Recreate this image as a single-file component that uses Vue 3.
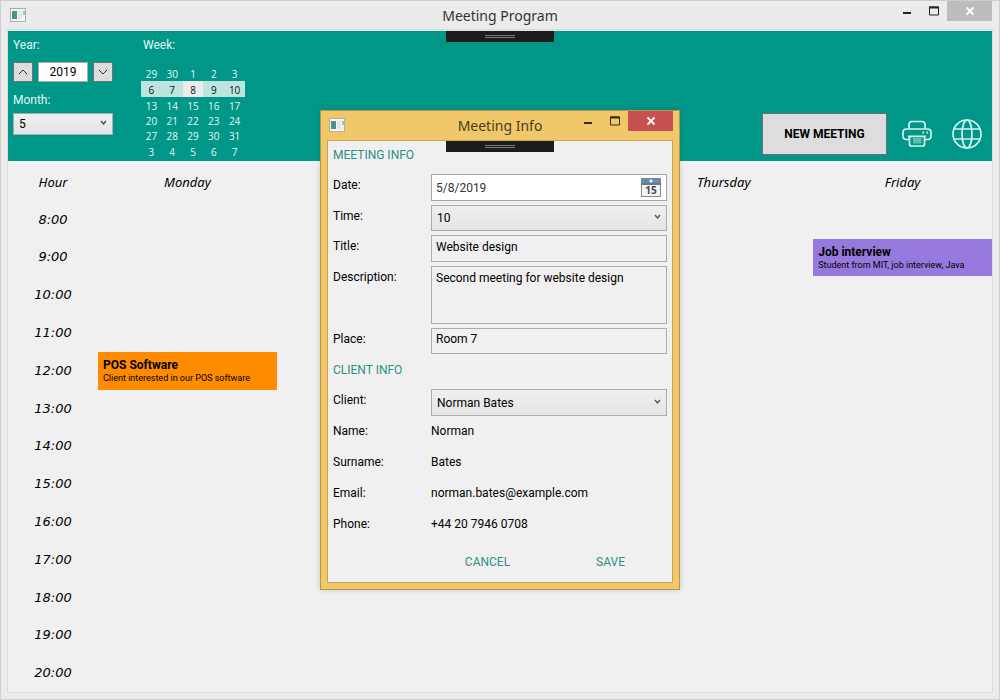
<script setup>
import { ref } from 'vue'

const year = ref('2019')
const month = ref('5')
const weeks = [
  [29, 30, 1, 2, 3],
  [6, 7, 8, 9, 10],
  [13, 14, 15, 16, 17],
  [20, 21, 22, 23, 24],
  [27, 28, 29, 30, 31],
  [3, 4, 5, 6, 7],
]
const days = ['Monday', '', '', 'Thursday', 'Friday']
const hours = Array.from({ length: 13 }, (_, i) => i + 8)
const events = [
  { day: 0, hour: 12, title: 'POS Software', note: 'Client interested in our POS software', kind: 'orange' },
  { day: 4, hour: 9, title: 'Job interview', note: 'Student from MIT, job interview, Java', kind: 'violet' },
]
const eventsAt = (day, hour) => events.filter((e) => e.day === day && e.hour === hour)

const form = ref({
  date: '5/8/2019',
  time: '10',
  title: 'Website design',
  description: 'Second meeting for website design',
  place: 'Room 7',
  client: 'Norman Bates',
})
const details = [
  ['Name:', 'Norman'],
  ['Surname:', 'Bates'],
  ['Email:', 'norman.bates@example.com'],
  ['Phone:', '+44 20 7946 0708'],
]
</script>

<template>
  <div class="window">
    <header class="titlebar">
      <svg class="app-icon" width="16" height="14" viewBox="0 0 16 14" aria-hidden="true">
        <rect x="0.5" y="0.5" width="15" height="13" fill="#f4f6f6" stroke="#a9aeb2" />
        <rect x="2" y="3" width="5" height="8" fill="#4f8f8a" />
        <rect x="8" y="3" width="4" height="8" fill="#e0e6ea" />
        <rect x="13" y="3" width="2" height="4" fill="#9cc4bd" />
      </svg>
      <h1 class="caption">Meeting Program</h1>
      <div class="controls">
        <button class="ctl" aria-label="Minimize"><svg width="10" height="10" viewBox="0 0 10 10"><rect x="1" y="6" width="8" height="2" fill="#222" /></svg></button>
        <button class="ctl" aria-label="Maximize"><svg width="10" height="10" viewBox="0 0 10 10"><path d="M.5 1v8h9V1z" fill="none" stroke="#222" /><path d="M0 1.5h10" stroke="#222" stroke-width="2" /></svg></button>
        <button class="ctl close" aria-label="Close"><svg width="10" height="10" viewBox="0 0 10 10"><path d="M1.5 1.5l7 7m0-7l-7 7" stroke="#fff" stroke-width="1.8" /></svg></button>
      </div>
    </header>

    <main class="client">
      <span class="grip"></span>
      <section class="toolbar">
        <div class="period">
          <label class="tlabel" for="year">Year:</label>
          <div class="spinner">
            <button class="step" aria-label="Previous year"><svg width="10" height="6" viewBox="0 0 10 6"><path d="M1 5l4-4 4 4" fill="none" stroke="#333" /></svg></button>
            <input id="year" v-model="year" class="year" type="text" />
            <button class="step" aria-label="Next year"><svg width="10" height="6" viewBox="0 0 10 6"><path d="M1 1l4 4 4-4" fill="none" stroke="#333" /></svg></button>
          </div>
          <label class="tlabel month-label" for="month">Month:</label>
          <div class="picker month">
            <select id="month" v-model="month"><option>5</option></select>
            <svg class="chev" width="7" height="6" viewBox="0 0 7 6"><path d="M1 1l2.5 3L6 1" fill="none" stroke="#444" stroke-width="1.3" /></svg>
          </div>
        </div>
        <div class="week">
          <span id="week-label" class="tlabel">Week:</span>
          <table class="calendar" aria-labelledby="week-label">
            <tbody>
              <tr v-for="(w, i) in weeks" :key="i" :class="{ chosen: i === 1 }">
                <td v-for="d in w" :key="d" :class="{ today: i === 1 && d === 8 }">{{ d }}</td>
              </tr>
            </tbody>
          </table>
        </div>
        <div class="actions">
          <button class="new">NEW MEETING</button>
          <button class="icon" aria-label="Print">
            <svg width="30" height="28" viewBox="0 0 30 28" fill="none" stroke="#d5f3ee" stroke-width="1.7" stroke-linejoin="round">
              <path d="M7 8.500V4.500Q7 1.500 10 1.500H20Q23 1.500 23 4.500V8.500" />
              <path d="M7.500 19.500H4.500Q1 19.500 1 16V12.500Q1 9 4.500 9H25.500Q29 9 29 12.500V16Q29 19.500 25.500 19.500H22.500" />
              <path d="M6 16.300H24M7.500 16.500V24Q7.500 26 9.500 26H20.500Q22.500 26 22.500 24V16.500" />
              <rect x="11" y="18" width="8.500" height="5.500" fill="#62bdb1" stroke="none" />
              <path d="M20.500 12.500h1.600M24.500 12.500h1.600" stroke-width="2.200" />
            </svg>
          </button>
          <button class="icon" aria-label="Website">
            <svg width="30" height="30" viewBox="0 0 30 30" fill="none" stroke="#d5f3ee" stroke-width="1.7">
              <circle cx="15" cy="15" r="14" />
              <ellipse cx="15" cy="15" rx="5" ry="14" />
              <path d="M2 10h26M2 20h26" />
            </svg>
          </button>
        </div>
      </section>

      <table class="schedule">
        <thead>
          <tr>
            <th>Hour</th>
            <th v-for="(d, i) in days" :key="i">{{ d }}</th>
          </tr>
        </thead>
        <tbody>
          <tr v-for="h in hours" :key="h">
            <th class="hour">{{ h }}:00</th>
            <td v-for="(d, i) in days" :key="i">
              <div v-for="e in eventsAt(i, h)" :key="e.title" class="event" :class="e.kind">
                <strong>{{ e.title }}</strong>
                <span>{{ e.note }}</span>
              </div>
            </td>
          </tr>
        </tbody>
      </table>
    </main>

    <div class="overlay">
      <section class="dialog" role="dialog" aria-labelledby="dialog-title">
        <header class="titlebar">
          <svg class="app-icon" width="16" height="14" viewBox="0 0 16 14" aria-hidden="true">
            <rect x="0.5" y="0.5" width="15" height="13" fill="#f4f6f6" stroke="#b5b09c" />
            <rect x="2" y="3" width="5" height="8" fill="#4f8f8a" />
            <rect x="8" y="3" width="4" height="8" fill="#e0e6ea" />
            <rect x="13" y="3" width="2" height="4" fill="#9cc4bd" />
          </svg>
          <h2 id="dialog-title" class="caption">Meeting Info</h2>
          <div class="controls">
            <button class="ctl" aria-label="Minimize"><svg width="10" height="10" viewBox="0 0 10 10"><rect x="1" y="6" width="8" height="2" fill="#332a12" /></svg></button>
            <button class="ctl" aria-label="Maximize"><svg width="10" height="10" viewBox="0 0 10 10"><path d="M.5 1v8h9V1z" fill="none" stroke="#332a12" /><path d="M0 1.500h10" stroke="#332a12" stroke-width="2" /></svg></button>
            <button class="ctl close red" aria-label="Close"><svg width="10" height="10" viewBox="0 0 10 10"><path d="M1.500 1.500l7 7m0-7l-7 7" stroke="#fff" stroke-width="1.800" /></svg></button>
          </div>
        </header>
        <form class="sheet" @submit.prevent>
          <span class="grip"></span>
          <h3>MEETING INFO</h3>
          <div class="fields">
            <label for="date">Date:</label>
            <div class="datebox">
              <input id="date" v-model="form.date" type="text" />
              <button type="button" aria-label="Open calendar">
                <svg width="20" height="19" viewBox="0 0 20 19">
                  <rect x="0.500" y="0.500" width="19" height="18" fill="#f4f4f4" stroke="#83888f" />
                  <rect x="1" y="1" width="18" height="4" fill="#5b8fc2" />
                  <rect x="0" y="5" width="20" height="2" fill="#707780" />
                  <circle cx="10" cy="3" r="1.500" fill="#fff" />
                  <text x="10" y="16" text-anchor="middle" font-family="Open Sans, sans-serif" font-weight="700" font-size="10" fill="#45484d">15</text>
                </svg>
              </button>
            </div>
            <label for="time">Time:</label>
            <div class="picker time">
              <select id="time" v-model="form.time"><option>10</option></select>
              <svg class="chev" width="7" height="6" viewBox="0 0 7 6"><path d="M1 1l2.500 3L6 1" fill="none" stroke="#555" stroke-width="1.300" /></svg>
            </div>
            <label for="title">Title:</label>
            <input id="title" v-model="form.title" class="text title" type="text" />
            <label for="description">Description:</label>
            <textarea id="description" v-model="form.description" class="text"></textarea>
            <label for="place">Place:</label>
            <input id="place" v-model="form.place" class="text place" type="text" />
          </div>
          <h3 class="second">CLIENT INFO</h3>
          <div class="fields">
            <label for="client">Client:</label>
            <div class="picker who">
              <select id="client" v-model="form.client"><option>Norman Bates</option></select>
              <svg class="chev" width="7" height="6" viewBox="0 0 7 6"><path d="M1 1l2.500 3L6 1" fill="none" stroke="#555" stroke-width="1.300" /></svg>
            </div>
          </div>
          <dl class="details">
            <template v-for="[k, v] in details" :key="k">
              <dt>{{ k }}</dt>
              <dd>{{ v }}</dd>
            </template>
          </dl>
          <div class="buttons">
            <button type="button">CANCEL</button>
            <button type="submit">SAVE</button>
          </div>
        </form>
      </section>
    </div>
  </div>
</template>

<style>
body {
  background: #ebebeb;
}
</style>

<style scoped>
*,
*::after {
  box-sizing: border-box;
}
button,
input,
select,
textarea {
  font: inherit;
  color: inherit;
  margin: 0;
  padding: 0;
  border: 0;
  background: none;
  border-radius: 0;
  outline: none;
}
svg {
  display: block;
}
.window {
  position: relative;
  display: flex;
  flex-direction: column;
  min-height: 100vh;
  padding: 0 7px 7px;
  border: 1px solid #cdcdcd;
  background: #ebebeb;
  font: 12px/18px Roboto, sans-serif;
  color: #000;
}
.titlebar {
  display: grid;
  grid-template-columns: 1fr auto 1fr;
  height: 29px;
}
.app-icon {
  margin: 7px 0 0 2px;
}
.caption {
  margin: 0;
  font: 14px/29px "Noto Sans", sans-serif;
  color: #333;
}
.controls {
  display: flex;
  justify-content: flex-end;
  align-items: flex-start;
}
.ctl {
  display: grid;
  place-items: center;
  width: 27px;
  height: 20px;
}
.close {
  width: 45px;
  background: #bcbcbc;
}
.client {
  position: relative;
  flex: 1;
  display: flex;
  flex-direction: column;
  background: #f0f0f0;
  border-top: 1px solid #d5e8e5;
  box-shadow: 0 0 0 1px #dcdcdc;
}
.grip {
  position: absolute;
  top: 0;
  left: 50%;
  width: 108px;
  height: 11px;
  margin-left: -54px;
  background: #1c1c1c;
}
.grip::after {
  content: '';
  position: absolute;
  left: 39px;
  top: 4px;
  width: 30px;
  height: 3px;
  border: solid #777;
  border-width: 1px 0;
}
.toolbar {
  display: flex;
  padding: 5px;
  height: 130px;
  background: #009788;
}
.tlabel {
  display: block;
  color: #e4f7f4;
}
.period {
  width: 100px;
}
.spinner {
  display: flex;
  justify-content: space-between;
  margin-top: 8px;
}
.step {
  display: grid;
  place-items: center;
  width: 20px;
  height: 20px;
  background: #ddd;
  border: 1px solid #707070;
}
.year {
  width: 50px;
  height: 20px;
  background: #fff;
  border: 1px solid #abadb3;
  text-align: center;
}
.month-label {
  margin-top: 9px;
}
.picker {
  position: relative;
}
.picker select {
  appearance: none;
  display: block;
  width: 100%;
  height: 100%;
  padding: 0 5px;
  border: 1px solid #acacac;
  background: linear-gradient(#f0f0f0, #e4e4e4);
}
.chev {
  position: absolute;
  right: 6px;
  top: 50%;
  margin-top: -4px;
  pointer-events: none;
}
.month {
  height: 22px;
  margin-top: 4px;
}
.week {
  margin-left: 28px;
}
.week .tlabel {
  padding-left: 2px;
}
.calendar {
  width: 104px;
  margin-top: 12px;
  border-collapse: collapse;
  table-layout: fixed;
  font: 10px/13px "Open Sans", sans-serif;
  color: #e4f7f4;
  text-align: center;
}
.calendar td {
  height: 15px;
  padding: 2px 0 0;
}
.calendar tr:nth-child(3) td,
.calendar tr:nth-child(6) td {
  height: 16px;
}
.calendar .chosen td {
  height: 16px;
  background: #bde4dd;
  color: #111;
}
.calendar .chosen .today {
  background: #ebebeb;
}
.actions {
  display: flex;
  align-items: center;
  gap: 20px;
  height: 42px;
  margin: auto 5px 1px auto;
}
.new {
  width: 125px;
  height: 42px;
  margin-right: -5px;
  border: 1px solid #707070;
  background: #ddd;
  font-weight: 700;
  color: #000;
}
.schedule {
  flex: 1;
  display: grid;
  grid-template-rows: repeat(14, 1fr);
  padding-top: 2px;
  font: 13px/20px "Noto Sans", sans-serif;
}
.schedule thead,
.schedule tbody {
  display: contents;
}
.schedule tr {
  display: grid;
  grid-template-columns: 90px repeat(5, 1fr);
}
.schedule th {
  display: grid;
  place-items: center;
  padding: 0;
  font-weight: 400;
  font-style: italic;
}
.schedule .hour {
  font-family: "DejaVu Sans", sans-serif;
}
.schedule td {
  display: grid;
  padding: 0;
}
.event {
  display: flex;
  flex-direction: column;
  padding: 6px 5px 0;
  white-space: nowrap;
  overflow: hidden;
  font-family: Roboto, sans-serif;
  color: #000;
}
.event strong {
  font-size: 12px;
  line-height: 15px;
}
.event span {
  font-size: 9px;
  line-height: 11px;
}
.orange {
  background: #ff8c00;
}
.violet {
  background: #9679dc;
}
.overlay {
  position: absolute;
  inset: 0;
  display: grid;
  place-items: center;
}
.dialog {
  width: 360px;
  padding: 0 6px 6px;
  border: 1px solid #b9944a;
  background: #f0c869;
  box-shadow: 0 0 5px rgba(0, 0, 0, 0.16);
}
.dialog .caption {
  color: #4a3d1e;
}
.red {
  background: #c75050;
}
.sheet {
  position: relative;
  padding: 4px 5px 9px;
  border: 1px solid #c9a455;
  background: #f0f0f0;
}
h3 {
  margin: 0 0 9px;
  font: 12px/20px Roboto, sans-serif;
  color: #2a9184;
}
.second {
  margin-top: 6px;
}
.fields {
  display: grid;
  grid-template-columns: 98px 1fr;
  row-gap: 4px;
}
.fields label {
  line-height: 23px;
}
.datebox {
  display: flex;
  align-items: center;
  height: 27px;
  padding: 0 5px 0 4px;
  border: 1px solid #9aaabb;
  background: #fff;
}
.datebox input {
  flex: 1;
  min-width: 0;
  color: #333;
}
.time {
  height: 26px;
}
.text {
  display: block;
  width: 100%;
  padding: 2px 4px;
  border: 1px solid #abadb3;
  line-height: 18px;
}
.title {
  height: 27px;
  padding-bottom: 5px;
}
textarea.text {
  height: 58px;
  resize: none;
}
.place {
  height: 26px;
  padding-bottom: 6px;
}
.who {
  height: 27px;
}
.details {
  display: grid;
  grid-template-columns: 98px 1fr;
  row-gap: 9px;
  margin: 4px 0 16px;
  line-height: 22px;
}
.details dd {
  margin: 0;
}
.buttons {
  display: grid;
  grid-template-columns: 1fr 1fr;
  margin: 0 -5px 0 93px;
  color: #2a9184;
}
.buttons button {
  height: 22px;
}
</style>
